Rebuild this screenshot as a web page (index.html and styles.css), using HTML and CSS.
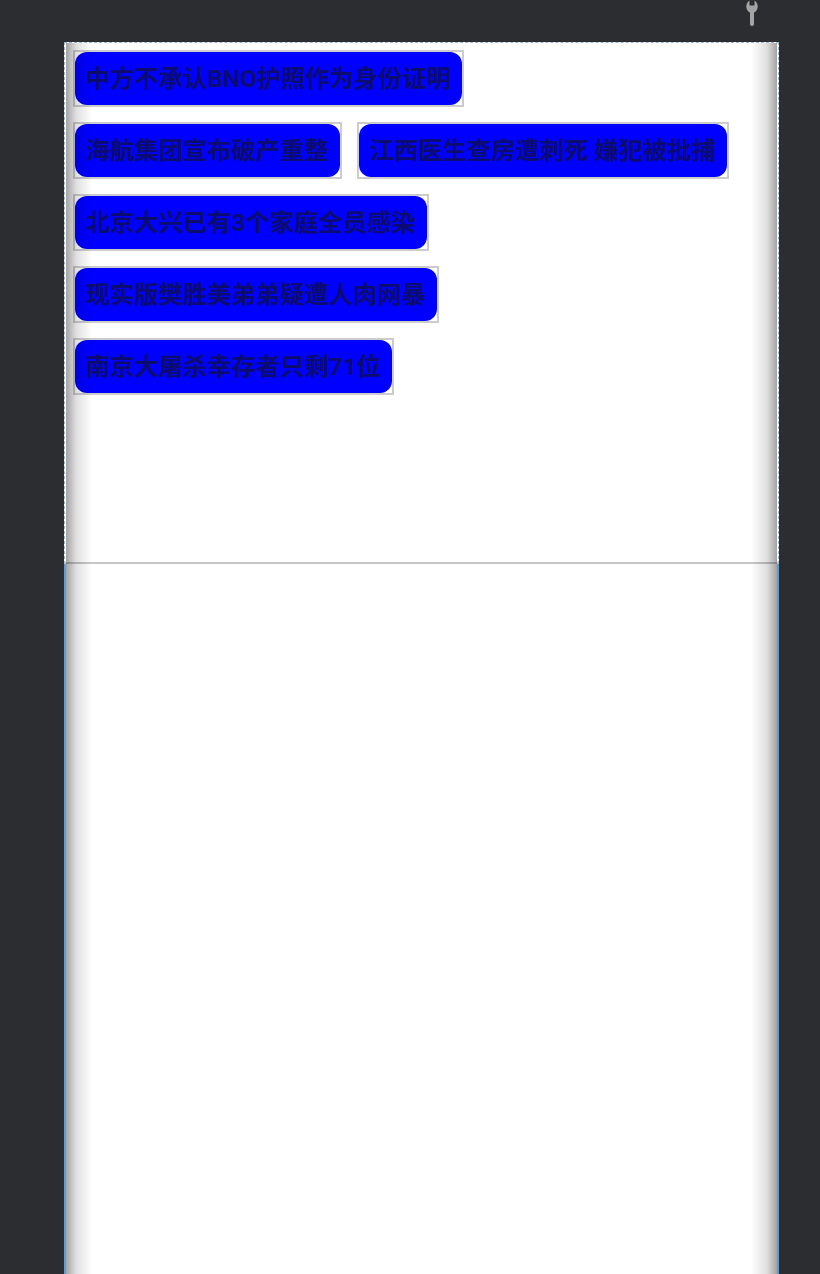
FILE: index.html
```html
<!DOCTYPE html>
<html lang="zh">
<head>
<meta charset="utf-8">
<title>Tags</title>
<link rel="stylesheet" href="styles.css">
</head>
<body>
<div class="toolbar">
  <svg class="wrench" width="20" height="28" viewBox="0 0 20 28">
    <path d="M7.5 0.5 L7.5 5.5 L12.5 5.5 L12.5 0.5 A7 7 0 0 1 12 12.6 L12 24 A2 2 0 0 1 8 24 L8 12.6 A7 7 0 0 1 7.5 0.5 Z" fill="#a4a4a4"/>
  </svg>
</div>
<div class="device">
  <div class="panel">
    <div class="row">
      <div class="tag"><div class="pill">中方不承认BNO护照作为身份证明</div></div>
    </div>
    <div class="row">
      <div class="tag"><div class="pill">海航集团宣布破产重整</div></div>
      <div class="tag"><div class="pill">江西医生查房遭刺死 嫌犯被批捕</div></div>
    </div>
    <div class="row">
      <div class="tag"><div class="pill">北京大兴已有3个家庭全员感染</div></div>
    </div>
    <div class="row">
      <div class="tag"><div class="pill">现实版樊胜美弟弟疑遭人肉网暴</div></div>
    </div>
    <div class="row">
      <div class="tag"><div class="pill">南京大屠杀幸存者只剩71位</div></div>
    </div>
  </div>
  <div class="rest"></div>
</div>
</body>
</html>
```

FILE: styles.css
```css
html, body {
  margin: 0;
  padding: 0;
}
body {
  background: #2b2d30;
  width: 820px;
  height: 1274px;
  overflow: hidden;
  font-family: "Roboto", "Noto Sans CJK SC", sans-serif;
}
.toolbar {
  height: 42px;
  display: flex;
  justify-content: flex-end;
  align-items: flex-start;
  padding-right: 58px;
}
.wrench {
  display: block;
}
.device {
  position: relative;
  margin-left: 64px;
  width: 715px;
  height: 1232px;
  background: #ffffff;
  display: flex;
  flex-direction: column;
}
.device::before,
.device::after {
  content: "";
  position: absolute;
  top: 1px;
  bottom: 0;
  width: 26px;
  pointer-events: none;
}
.device::before {
  left: 2px;
  background: linear-gradient(to right, rgba(0,0,0,0.36), rgba(0,0,0,0.12) 40%, rgba(0,0,0,0));
}
.device::after {
  right: 2px;
  background: linear-gradient(to left, rgba(0,0,0,0.36), rgba(0,0,0,0.12) 40%, rgba(0,0,0,0));
}
.panel {
  height: 512px;
  border: 1px dashed #9fb4c8;
  border-bottom: 2px solid #c6c6c6;
  padding: 7px 0 0 8px;
  display: flex;
  flex-direction: column;
  gap: 15px;
}
.row {
  display: flex;
  gap: 15px;
}
.tag {
  border: 2px solid #cccccc;
}
.pill {
  background: #0000ff;
  border-radius: 12px;
  height: 53px;
  line-height: 53px;
  padding: 0 11px;
  font-size: 24.3px;
  font-weight: 700;
  color: #0c0c70;
  white-space: nowrap;
}
.rest {
  flex: 1;
  border-left: 2px solid #5f9ad4;
  border-right: 2px solid #5f9ad4;
}
```
